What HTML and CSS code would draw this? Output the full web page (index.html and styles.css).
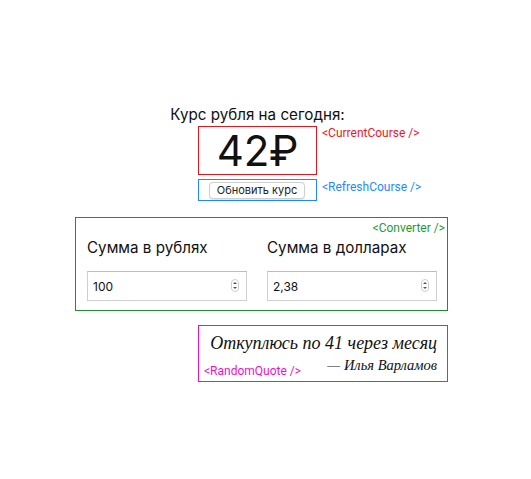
FILE: index.html
```html
<!DOCTYPE html>
<html lang="ru">
<head>
<meta charset="utf-8">
<link rel="stylesheet" href="styles.css">
</head>
<body>
<div class="app">
  <div class="title-row"><h1 class="title">Курс рубля на сегодня:</h1></div>
  <div class="comp current">
    <div class="rate">42₽</div>
    <span class="tag tag-red">&lt;CurrentCourse /&gt;</span>
  </div>
  <div class="comp refresh">
    <button class="btn">Обновить курс</button>
    <span class="tag tag-blue">&lt;RefreshCourse /&gt;</span>
  </div>
  <div class="converter">
    <div class="conv-tag">&lt;Converter /&gt;</div>
    <div class="fields">
      <label class="field">
        <span class="field-label">Сумма в рублях</span>
        <span class="input-wrap"><input class="input" type="text" value="100"><span class="spin"><i class="up"></i><i class="down"></i></span></span>
      </label>
      <label class="field">
        <span class="field-label">Сумма в долларах</span>
        <span class="input-wrap"><input class="input" type="text" value="2,38"><span class="spin"><i class="up"></i><i class="down"></i></span></span>
      </label>
    </div>
  </div>
  <div class="comp quote">
    <p class="quote-text">Откуплюсь по 41 через месяц</p>
    <p class="quote-author">— Илья Варламов</p>
    <span class="tag-quote">&lt;RandomQuote /&gt;</span>
  </div>
</div>
</body>
</html>
```

FILE: styles.css
```css
* { box-sizing: border-box; }
html, body { margin: 0; padding: 0; background: #fff; }
body { font-family: "Inter", "Liberation Sans", sans-serif; color: #111; }

.app {
  width: 373px;
  margin-left: 75px;
  padding-top: 105px;
  display: flex;
  flex-direction: column;
  align-items: flex-start;
}

.title-row {
  width: 119px;
  margin-left: 123px;
  display: flex;
  justify-content: center;
}
.title {
  margin: 0;
  font-size: 15.2px;
  font-weight: 400;
  line-height: 20px;
  white-space: nowrap;
  color: #111;
}

.comp { position: relative; margin-left: 123px; }

.current {
  margin-top: 1px;
  width: 119px;
  height: 49px;
  border: 1px solid #e8141b;
  display: flex;
  align-items: center;
  justify-content: center;
}
.rate {
  font-size: 42px;
  line-height: 46px;
  letter-spacing: -0.3px;
  color: #111;
}

.tag {
  position: absolute;
  left: calc(100% + 6px);
  top: 0;
  font-family: "Roboto", sans-serif;
  font-size: 12px;
  line-height: 12px;
  white-space: nowrap;
}
.tag-red { color: #f0141e; }
.tag-blue { color: #1a8cff; top: 1px; }

.refresh {
  margin-top: 4px;
  width: 119px;
  height: 22px;
  border: 1px solid #1a8cff;
  display: flex;
  align-items: center;
  padding-left: 10px;
}
.btn {
  width: 96px;
  height: 17px;
  padding: 0;
  font-family: "Inter", "Liberation Sans", sans-serif;
  font-size: 11px;
  line-height: 15px;
  color: #222;
  background: #fff;
  border: 1px solid #cfcfcf;
  border-radius: 4px;
  box-shadow: 0 0.5px 1px rgba(0,0,0,0.12);
}

.converter {
  margin-top: 16px;
  width: 373px;
  height: 94px;
  border: 1px solid #1e8e2e;
  padding: 4px 10px 0 11px;
  display: flex;
  flex-direction: column;
}
.conv-tag {
  align-self: flex-end;
  font-family: "Roboto", sans-serif;
  font-size: 12px;
  line-height: 12px;
  color: #1e9a2e;
  margin-right: -8px;
}
.fields {
  display: flex;
  gap: 20px;
  margin-top: 4px;
}
.field { display: flex; flex-direction: column; width: 160px; }
.field:last-child { width: 170px; }
.field-label {
  font-size: 15.2px;
  line-height: 20px;
  color: #111;
}
.input-wrap {
  position: relative;
  margin-top: 13px;
  display: block;
  height: 30px;
}
.input {
  width: 100%;
  height: 30px;
  border: 1px solid #cfcfcf;
  border-top-color: #bdbdbd;
  padding: 0 0 0 5px;
  font-family: "Inter", "Liberation Sans", sans-serif;
  font-size: 12px;
  color: #111;
  background: #fff;
  outline: none;
}
.spin {
  position: absolute;
  right: 8px;
  top: 8px;
  width: 8px;
  height: 13px;
  border: 1px solid #cfcfcf;
  border-radius: 4px;
}
.spin i {
  position: absolute;
  left: 1px;
  width: 0; height: 0;
  border-left: 2px solid transparent;
  border-right: 2px solid transparent;
}
.spin .up { top: 2px; border-bottom: 2.5px solid #555; }
.spin .down { bottom: 2px; border-top: 2.5px solid #555; }

.quote {
  margin-top: 14px;
  width: 250px;
  height: 57px;
  border: 1px solid #f00fc8;
  padding: 6px 10px 0 10px;
  text-align: right;
  font-family: "Liberation Serif", "DejaVu Serif", serif;
  font-style: italic;
  color: #111;
}
.quote-text {
  margin: 0;
  font-size: 18px;
  line-height: 22px;
}
.quote-author {
  margin: 3px 0 0 0;
  font-size: 14.5px;
  line-height: 16px;
}
.tag-quote {
  position: absolute;
  left: 5px;
  bottom: 4px;
  font-family: "Roboto", sans-serif;
  font-style: normal;
  font-size: 12px;
  line-height: 12px;
  color: #f00fc8;
}
```
